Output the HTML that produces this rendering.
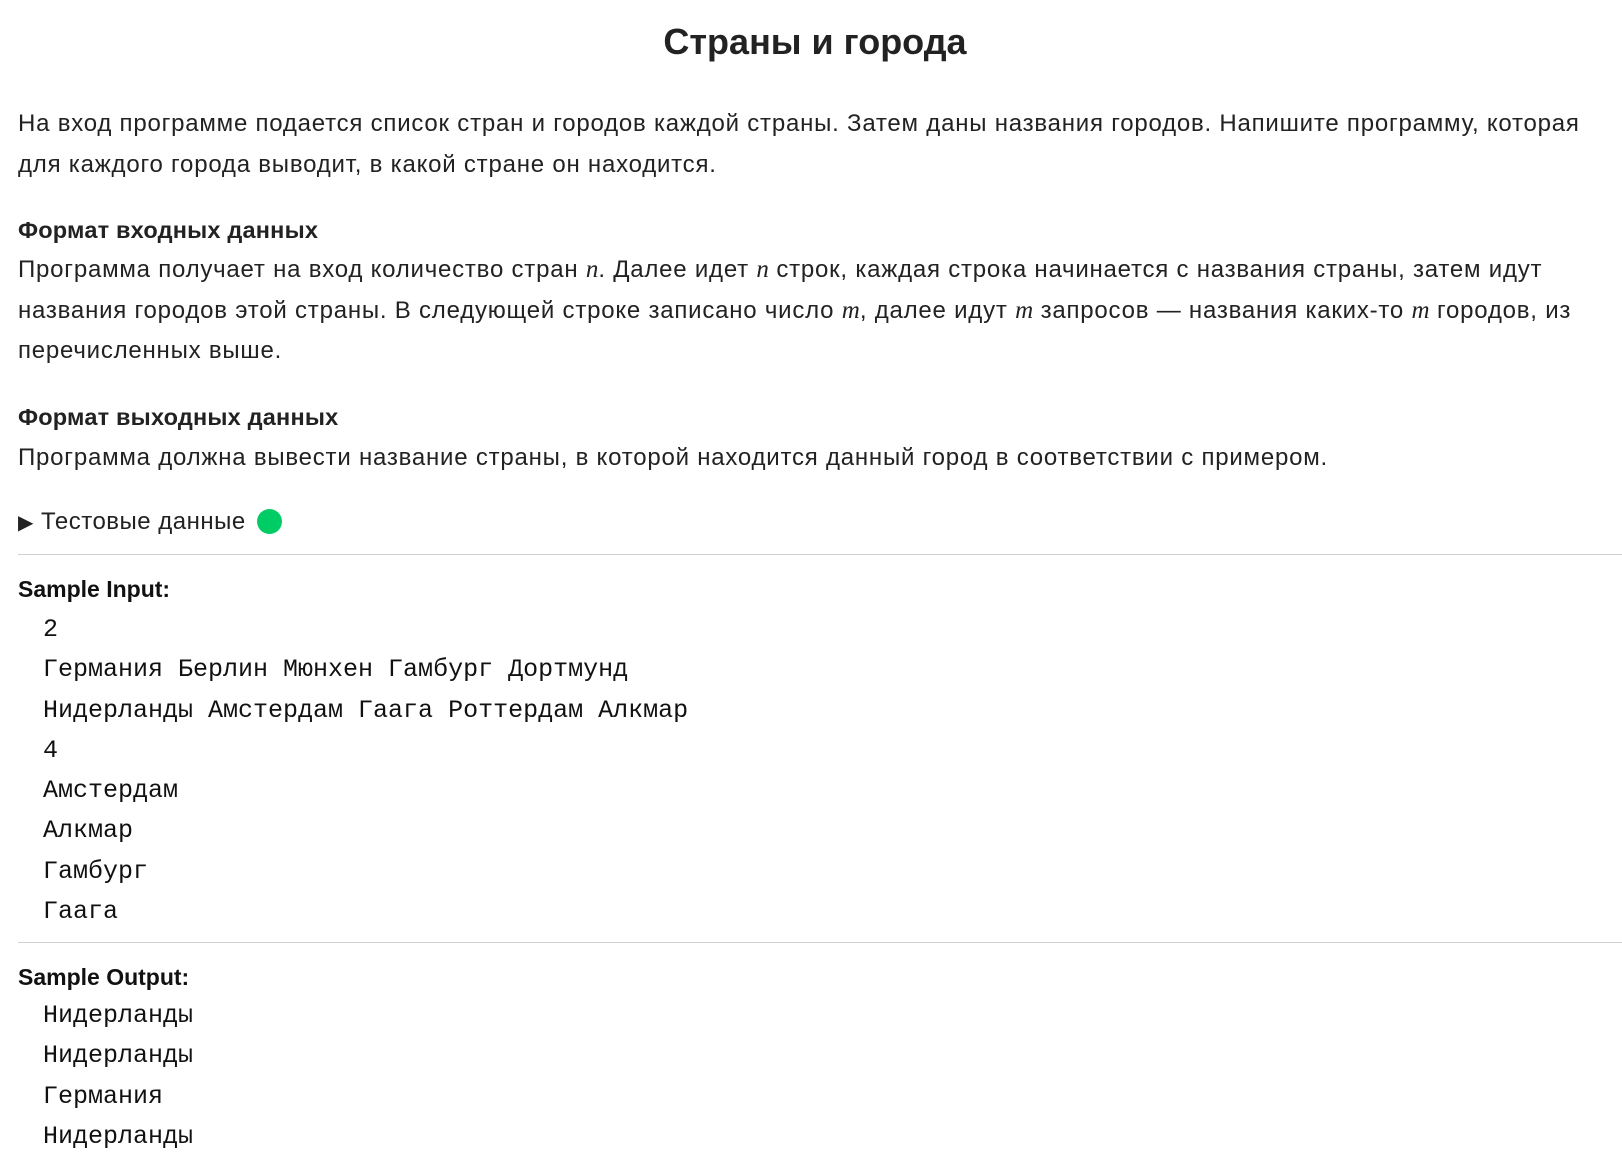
<!DOCTYPE html>
<html><head><meta charset="utf-8"><style>
body{margin:0;background:#fff;color:#222;font-family:"Liberation Sans",sans-serif;width:1622px;height:1151px;overflow:hidden;position:relative}
.a{position:absolute;left:18px;white-space:nowrap}
h1{position:absolute;left:0;right:0;top:18px;margin:0;text-align:center;font-size:36px;font-weight:bold;line-height:48px;padding-left:8px}
.p{font-size:24px;letter-spacing:0.78px;line-height:40.5px}
.h{font-size:23.5px;font-weight:bold;line-height:30px;letter-spacing:0.2px}
i{font-family:"Liberation Serif",serif;font-size:25px;letter-spacing:0}
.m{font-family:"Liberation Mono",monospace;font-size:25px;left:43px;color:#111}
hr{position:absolute;left:18px;right:0;margin:0;border:0;border-top:1.5px solid #d0d0d0}
.s{font-size:23px;font-weight:bold;color:#111}
</style></head><body>
<h1>Страны и города</h1>
<div class="a p" style="top:104px">На вход программе подается список стран и городов каждой страны. Затем даны названия городов. Напишите программу, которая<br>для каждого города выводит, в какой стране он находится.</div>
<div class="a h" style="top:215px">Формат входных данных</div>
<div class="a p" style="top:250px">Программа получает на вход количество стран <i>n</i>. Далее идет <i>n</i> строк, каждая строка начинается с названия страны, затем идут<br>названия городов этой страны. В следующей строке записано число <i>m</i>, далее идут <i>m</i> запросов — названия каких-то <i>m</i> городов, из<br>перечисленных выше.</div>
<div class="a h" style="top:402px">Формат выходных данных</div>
<div class="a p" style="top:438px">Программа должна вывести название страны, в которой находится данный город в соответствии с примером.</div>
<div class="a p" style="top:502px;font-size:24px;letter-spacing:0.5px"><span style="font-size:20px">▶</span> Тестовые данные <span style="display:inline-block;width:25px;height:25px;border-radius:50%;background:#00cc66;vertical-align:-5px;margin-left:4px"></span></div>
<hr style="top:554px">
<div class="a s" style="top:576px">Sample Input:</div>
<div class="a m" style="top:610px;line-height:40.3px">2<br>Германия Берлин Мюнхен Гамбург Дортмунд<br>Нидерланды Амстердам Гаага Роттердам Алкмар<br>4<br>Амстердам<br>Алкмар<br>Гамбург<br>Гаага</div>
<hr style="top:942px">
<div class="a s" style="top:964px">Sample Output:</div>
<div class="a m" style="top:996px;line-height:40.3px">Нидерланды<br>Нидерланды<br>Германия<br>Нидерланды</div>
</body></html>
